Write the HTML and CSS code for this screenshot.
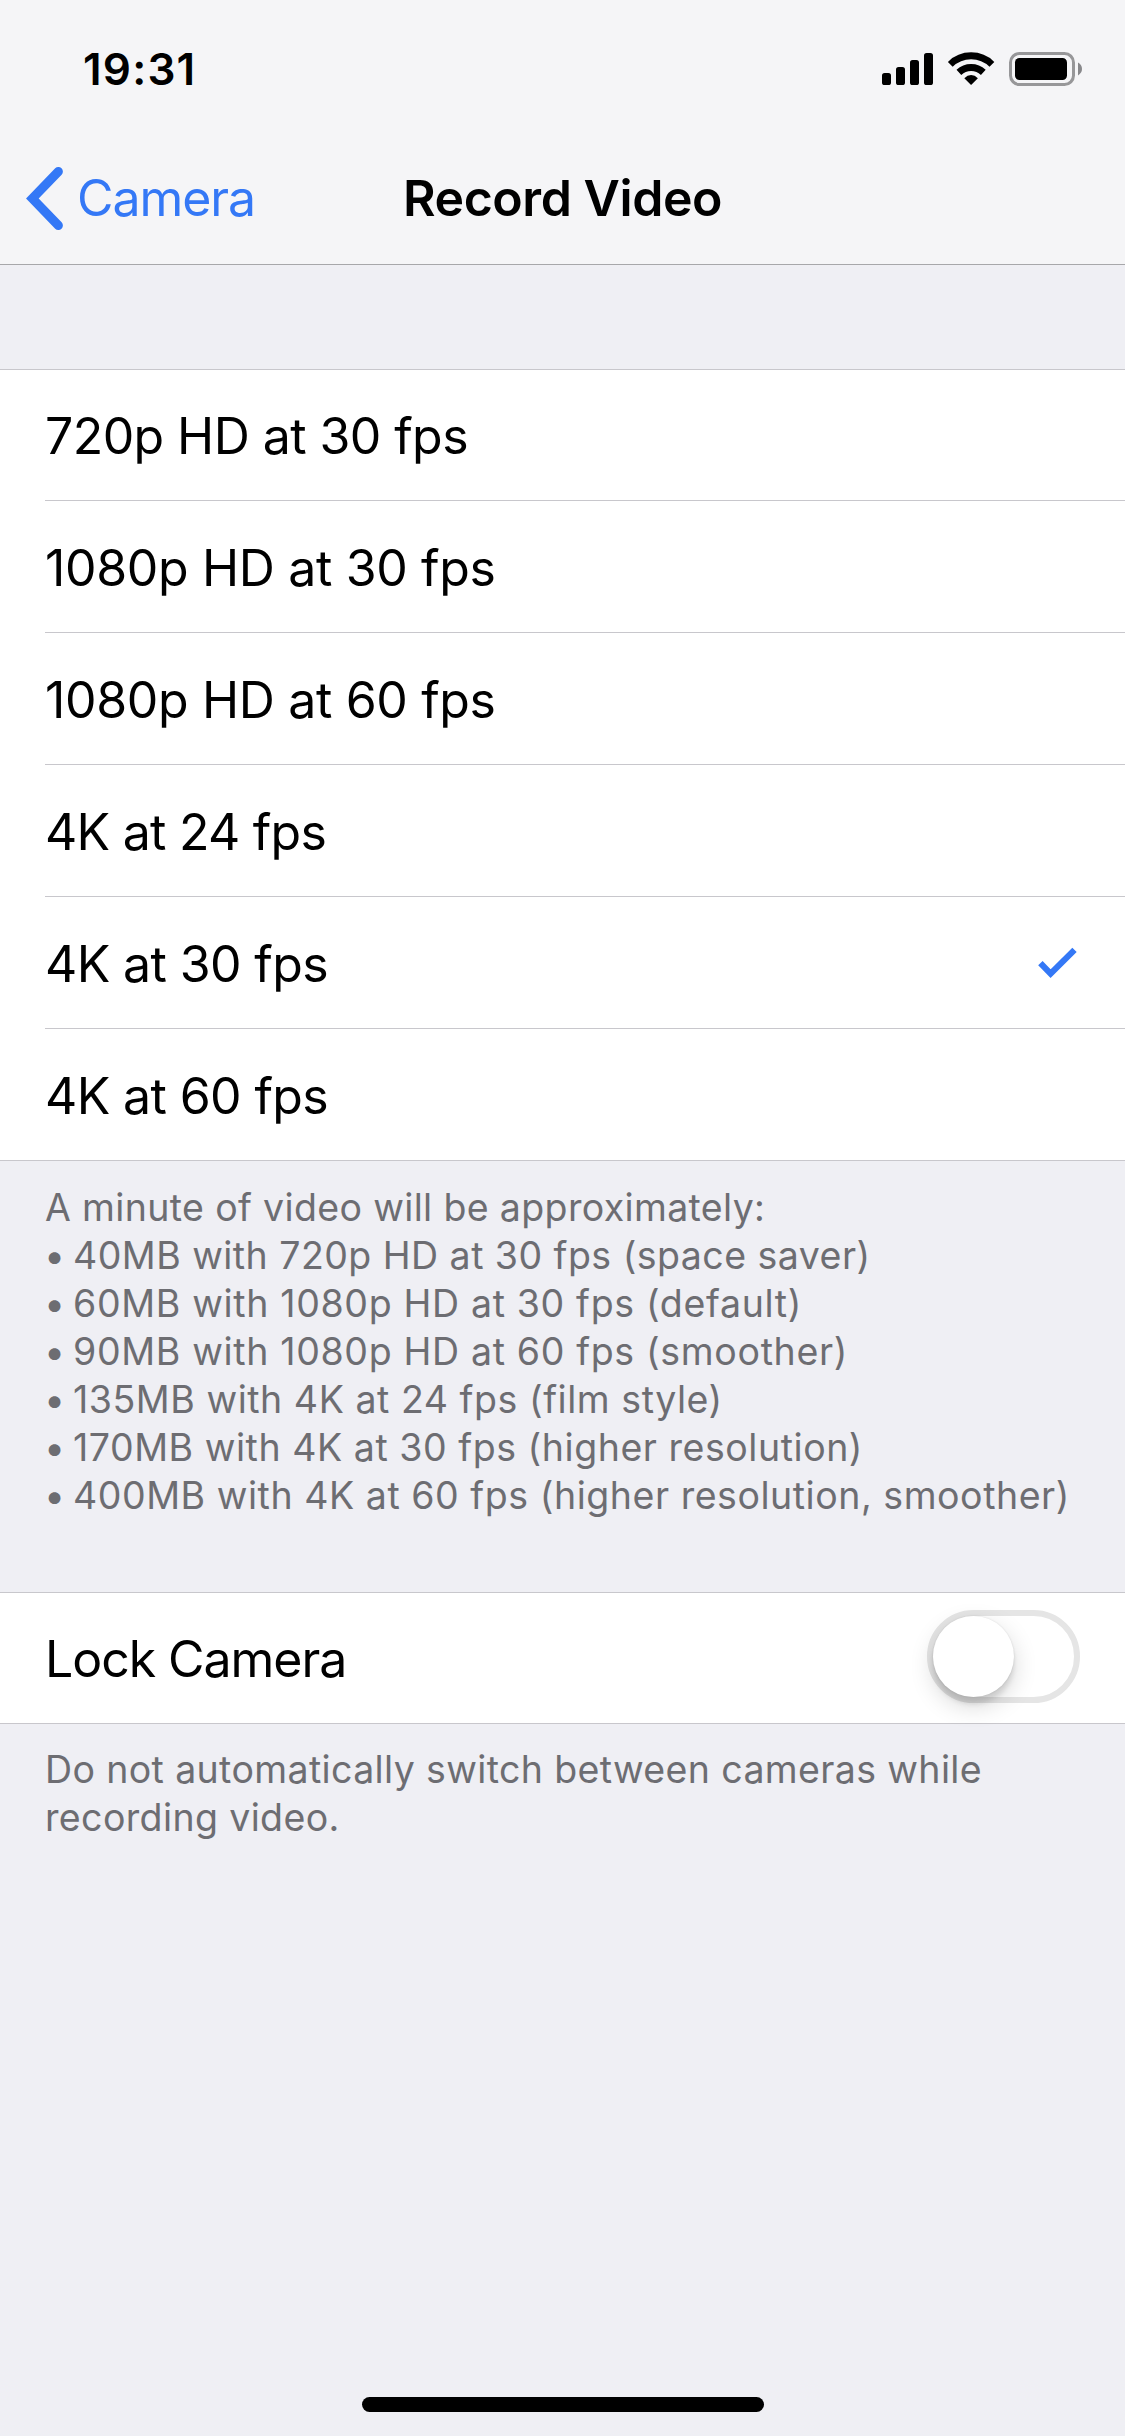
FILE: index.html
```
<!DOCTYPE html>
<html lang="en">
<head>
<meta charset="utf-8">
<title>Record Video</title>
<link rel="stylesheet" href="styles.css">
</head>
<body>
<div class="screen">
  <header class="header">
    <div class="status">
      <span class="time">19:31</span>
      <svg class="status-icons" width="204" height="40" viewBox="880 50 204 40">
        <rect x="882" y="73" width="9" height="12" rx="2.6"/>
        <rect x="896" y="67" width="9" height="18" rx="2.6"/>
        <rect x="910" y="60" width="9" height="25" rx="2.6"/>
        <rect x="924" y="53" width="9" height="32" rx="2.6"/>
        <g fill="none" stroke="#000">
          <path stroke-width="6.8" d="M950.3 64.3A29.6 29.6 0 0 1 991.9 64.3"/>
          <path stroke-width="7" d="M958.9 72.4A17.9 17.9 0 0 1 983.3 72.4"/>
        </g>
        <path d="M971.1 85L964.3 78.2Q967.4 75 971.1 75T977.9 78.2Z"/>
        <rect x="1010.5" y="53.5" width="63" height="31" rx="9" fill="none" stroke="#979799" stroke-width="3"/>
        <rect x="1015" y="58" width="52" height="22" rx="4.5"/>
        <path d="M1078 62.6Q1082 65 1082 69T1078 75.4Z" fill="#88888b"/>
      </svg>
    </div>
    <nav class="nav">
      <a class="back">
        <svg class="chevron" width="40" height="66" viewBox="25 165 40 66">
          <path d="M58.4 171.5L32.3 198.5L58.4 225.5"/>
        </svg>
        <span class="back-label">Camera</span>
      </a>
      <h1 class="title">Record Video</h1>
    </nav>
  </header>

  <main class="content">
    <ul class="group">
      <li class="row"><span class="label ls-a">720p HD at 30 fps</span></li>
      <li class="row"><span class="label ls-b">1080p HD at 30 fps</span></li>
      <li class="row"><span class="label ls-b">1080p HD at 60 fps</span></li>
      <li class="row"><span class="label ls-c">4K at 24 fps</span></li>
      <li class="row"><span class="label ls-d">4K at 30 fps</span>
        <svg class="check" width="42" height="34" viewBox="1036 946 42 34">
          <path d="M1040.4 963.2L1050.6 973.6L1074.5 949.9"/>
        </svg>
      </li>
      <li class="row"><span class="label ls-d">4K at 60 fps</span></li>
    </ul>
    <div class="note note-sizes">
      <p class="note-line intro">A minute of video will be approximately:</p>
      <ul class="sizes">
        <li class="note-line"><span class="bullet">•</span><span class="size s1">40MB with 720p HD at 30 fps (space saver)</span></li>
        <li class="note-line"><span class="bullet">•</span><span class="size s2">60MB with 1080p HD at 30 fps (default)</span></li>
        <li class="note-line"><span class="bullet">•</span><span class="size s2">90MB with 1080p HD at 60 fps (smoother)</span></li>
        <li class="note-line"><span class="bullet">•</span><span class="size s3">135MB with 4K at 24 fps (film style)</span></li>
        <li class="note-line"><span class="bullet">•</span><span class="size s3">170MB with 4K at 30 fps (higher resolution)</span></li>
        <li class="note-line"><span class="bullet">•</span><span class="size s4">400MB with 4K at 60 fps (higher resolution, smoother)</span></li>
      </ul>
    </div>
    <div class="group">
      <div class="row"><span class="label ls-lock">Lock Camera</span><span class="switch"><span class="knob"></span></span></div>
    </div>
    <p class="note note-lock">Do not automatically switch between cameras while recording video.</p>
  </main>
  <div class="home-bar"></div>
</div>
</body>
</html>
```
FILE: styles.css
```
* {
  box-sizing: border-box;
  margin: 0;
  padding: 0;
}

body {
  background: #efeff4;
  font-family: Inter, "Liberation Sans", sans-serif;
  color: #000;
}

ul {
  list-style: none;
}

.screen {
  display: flex;
  flex-direction: column;
  width: 1125px;
  height: 2436px;
  overflow: hidden;
}

.header {
  height: 265px;
  background: #f5f5f7;
  border-bottom: 1px solid #a7a7aa;
}

.status {
  display: flex;
  justify-content: space-between;
  height: 132px;
  padding: 42px 41px 0 83px;
}

.time {
  font-size: 44px;
  line-height: 54px;
  font-weight: 600;
  letter-spacing: 1.2px;
}

.status-icons {
  margin-top: 8px;
}

.nav {
  display: grid;
  grid-template-columns: 1fr auto 1fr;
  height: 132px;
  padding-top: 33px;
}

.back {
  display: flex;
  gap: 12px;
  padding-left: 25px;
  color: #3478f6;
}

.chevron path {
  fill: none;
  stroke: #3478f6;
  stroke-width: 9;
  stroke-linecap: round;
}

.back-label,
.title {
  margin-top: 3px;
  font-size: 50px;
  line-height: 60px;
}

.back-label {
  letter-spacing: -1.05px;
}

.title {
  font-weight: 600;
  letter-spacing: -0.44px;
}

.content {
  flex: 1;
  padding-top: 104px;
}

.group {
  background: #fff;
  border-top: 1px solid #c8c7cc;
  border-bottom: 1px solid #c8c7cc;
}

.row {
  display: flex;
  justify-content: space-between;
  height: 132px;
  margin-left: 45px;
  padding: 37px 45px 0 0;
  border-top: 1px solid #c8c7cc;
}

.row:first-child {
  height: 130px;
  padding-top: 36px;
  border-top: 0;
}

.label {
  font-size: 50px;
  line-height: 60px;
}

.ls-a { letter-spacing: -0.58px; }
.ls-b { letter-spacing: -0.35px; }
.ls-c { letter-spacing: -0.75px; }
.ls-d { letter-spacing: -0.62px; }
.ls-lock { letter-spacing: -1.05px; }

.check {
  margin: 12px 2px 0 0;
}

.check path {
  fill: none;
  stroke: #3478f6;
  stroke-width: 6.2;
}

.note {
  padding: 0 45px;
  color: #6d6d72;
  font-size: 37.5px;
  line-height: 48px;
}

.note-sizes {
  height: 431px;
  padding-top: 23px;
}

.note-line {
  display: flex;
  white-space: nowrap;
}

.intro { letter-spacing: 0.35px; }

.bullet {
  width: 29px;
  margin-left: -1px;
}

.s1 { letter-spacing: 0.46px; }
.s2 { letter-spacing: 0.66px; }
.s3 { letter-spacing: 0.54px; }
.s4 { letter-spacing: 0.54px; }

.note-lock {
  padding-top: 22px;
  letter-spacing: 0.37px;
}

.switch {
  width: 153px;
  height: 93px;
  margin-top: -19px;
  border: 6px solid #e5e5e5;
  border-radius: 47px;
}

.knob {
  display: block;
  width: 81px;
  height: 81px;
  border-radius: 50%;
  background: #fff;
  box-shadow: 0 9px 24px rgba(0, 0, 0, 0.16), 0 7px 5px rgba(0, 0, 0, 0.1), 0 0 2px rgba(0, 0, 0, 0.12);
}

.home-bar {
  align-self: center;
  width: 402px;
  height: 15px;
  margin-bottom: 24px;
  border-radius: 8px;
  background: #000;
}
```
